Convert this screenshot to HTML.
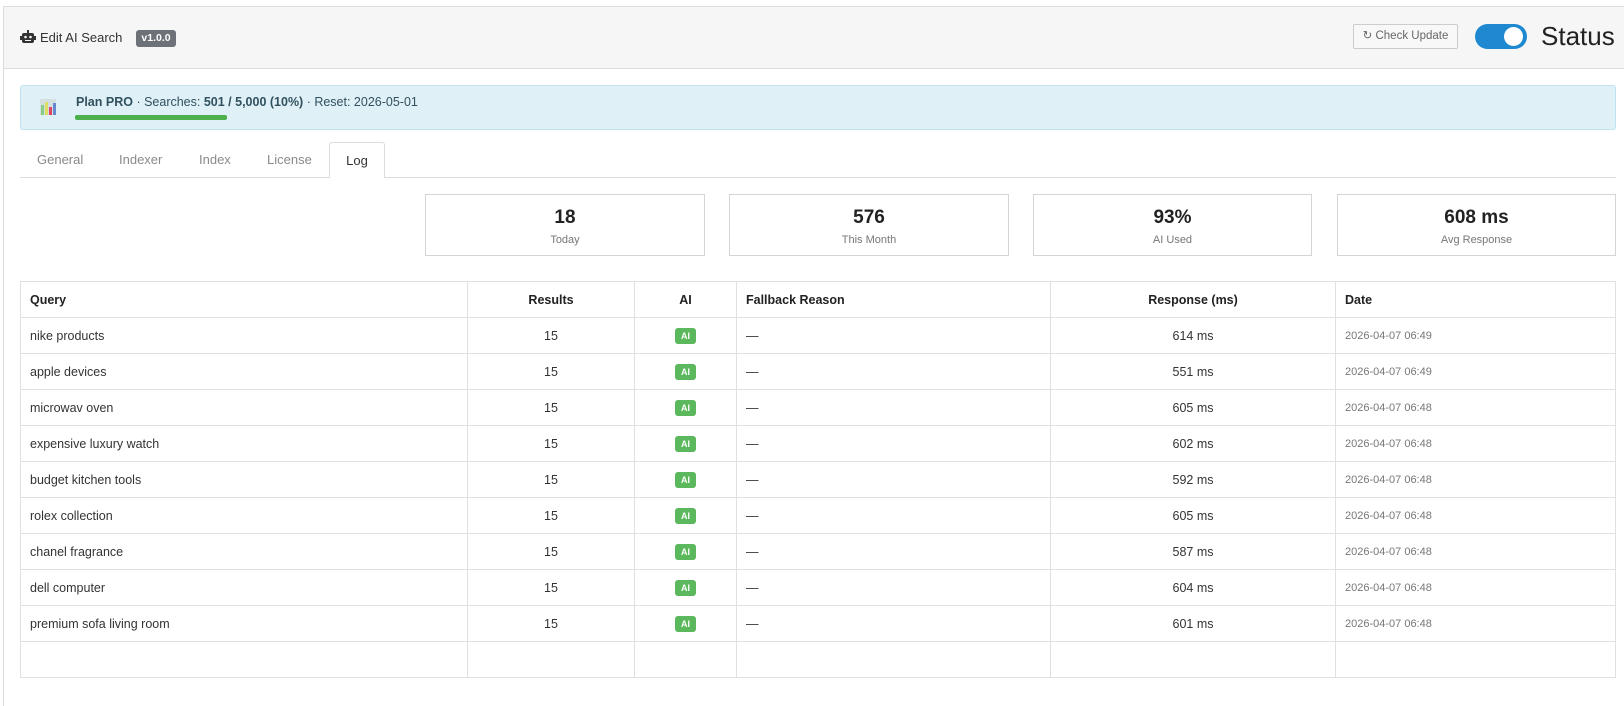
<!DOCTYPE html>
<html><head><meta charset="utf-8"><style>
*{box-sizing:border-box;margin:0;padding:0}
body{width:1624px;height:647px;overflow:hidden;background:#fff;font-family:"Liberation Sans",sans-serif;color:#333;position:relative}
.abs{position:absolute}
.frame{left:3px;top:6px;width:1640px;height:700px;border-left:1px solid #ddd;border-top:1px solid #ddd}
.head{left:4px;top:7px;width:1620px;height:62px;background:#f6f6f6;border-bottom:1px solid #ddd}
.title{left:40px;top:30px;font-size:13px;color:#333}
.badge{left:136px;top:30px;width:40px;height:17px;background:#6d7178;color:#fff;border-radius:3px;font-size:10.5px;font-weight:bold;text-align:center;line-height:17px}
.btn{left:1353px;top:24px;width:105px;height:25px;border:1px solid #ccc;border-radius:2px;background:#f8f8f8;font-size:11.5px;color:#666;line-height:23px;text-align:center}
.tog{left:1475px;top:24px;width:52px;height:25px;border-radius:13px;background:#1e88d0}
.tog:after{content:"";position:absolute;right:4px;top:3px;width:19px;height:19px;border-radius:50%;background:#fff}
.status{left:1541px;top:21px;font-size:26px;color:#222}
.alert{left:20px;top:85px;width:1596px;height:45px;background:#dff0f7;border:1px solid #bfe3ef;border-radius:3px}
.alert .t{position:absolute;left:55px;top:9px;font-size:12.5px;color:#31505e}
.bar{left:75px;top:115px;width:152px;height:5px;background:#4cb04c;border-radius:2px}
.tab{top:152px;font-size:13px;color:#8a8a8a}
.tabline{left:20px;top:177px;width:1596px;height:1px;background:#ddd}
.logtab{left:329px;top:142px;width:56px;height:36px;border:1px solid #ddd;border-bottom:none;background:#fff;border-radius:3px 3px 0 0;font-size:13px;color:#333;text-align:center;line-height:36px}
.card{top:194px;height:62px;border:1px solid #d5d5d5;text-align:center}
.card b{display:block;font-size:19px;margin-top:12px;color:#222}
.card span{display:block;font-size:11px;color:#777;margin-top:5px}
table{position:absolute;left:20px;top:281px;width:1596px;border-collapse:collapse;font-size:12.5px}
td,th{border:1px solid #e0e0e0;height:36px;padding:0 9px}
th{font-weight:bold;color:#222;text-align:left}
.c{text-align:center}
.ai{display:inline-block;width:21px;height:16px;background:#5cb85c;color:#fff;font-size:9px;font-weight:bold;border-radius:3px;line-height:16px;text-align:center}
.d{font-size:11px;color:#777}
</style></head><body>
<div class="abs frame"></div>
<div class="abs head"></div>
<svg class="abs" style="left:20px;top:30px" width="16" height="14" viewBox="0 0 16 14"><rect x="7" y="0" width="2" height="3" fill="#333"/><rect x="2" y="3" width="12" height="10" rx="2" fill="#333"/><rect x="0" y="6" width="2" height="4" fill="#333"/><rect x="14" y="6" width="2" height="4" fill="#333"/><circle cx="5.5" cy="7" r="1.3" fill="#f6f6f6"/><circle cx="10.5" cy="7" r="1.3" fill="#f6f6f6"/><rect x="5" y="10" width="6" height="1" fill="#f6f6f6"/></svg>
<div class="abs title">Edit AI Search</div>
<div class="abs badge">v1.0.0</div>
<div class="abs btn">&#x21bb; Check Update</div>
<div class="abs tog"></div>
<div class="abs status">Status</div>
<div class="abs alert"><div class="t"><b>Plan PRO</b> · Searches: <b>501 / 5,000 (10%)</b> · Reset: 2026-05-01</div></div>
<svg class="abs" style="left:40px;top:99px" width="16" height="16" viewBox="0 0 16 16"><rect x="0" y="0" width="16" height="16" fill="#ccc" opacity=".5"/><rect x="1" y="6" width="3" height="10" fill="#8c8"/><rect x="5" y="3" width="3" height="13" fill="#dd6"/><rect x="9" y="8" width="3" height="8" fill="#d46"/><rect x="13" y="4" width="3" height="12" fill="#68c"/></svg>
<div class="abs bar"></div>
<div class="abs tab" style="left:37px">General</div>
<div class="abs tab" style="left:119px">Indexer</div>
<div class="abs tab" style="left:199px">Index</div>
<div class="abs tab" style="left:267px">License</div>
<div class="abs tabline"></div>
<div class="abs logtab">Log</div>
<div class="abs card" style="left:425px;width:280px"><b>18</b><span>Today</span></div>
<div class="abs card" style="left:729px;width:280px"><b>576</b><span>This Month</span></div>
<div class="abs card" style="left:1033px;width:279px"><b>93%</b><span>AI Used</span></div>
<div class="abs card" style="left:1337px;width:279px"><b>608 ms</b><span>Avg Response</span></div>
<table>
<colgroup><col style="width:447px"><col style="width:167px"><col style="width:102px"><col style="width:314px"><col style="width:285px"><col></colgroup>
<tr><th>Query</th><th class="c">Results</th><th class="c">AI</th><th>Fallback Reason</th><th class="c">Response (ms)</th><th>Date</th></tr>
<tr><td>nike products</td><td class="c">15</td><td class="c"><span class="ai">AI</span></td><td>—</td><td class="c">614 ms</td><td class="d">2026-04-07 06:49</td></tr>
<tr><td>apple devices</td><td class="c">15</td><td class="c"><span class="ai">AI</span></td><td>—</td><td class="c">551 ms</td><td class="d">2026-04-07 06:49</td></tr>
<tr><td>microwav oven</td><td class="c">15</td><td class="c"><span class="ai">AI</span></td><td>—</td><td class="c">605 ms</td><td class="d">2026-04-07 06:48</td></tr>
<tr><td>expensive luxury watch</td><td class="c">15</td><td class="c"><span class="ai">AI</span></td><td>—</td><td class="c">602 ms</td><td class="d">2026-04-07 06:48</td></tr>
<tr><td>budget kitchen tools</td><td class="c">15</td><td class="c"><span class="ai">AI</span></td><td>—</td><td class="c">592 ms</td><td class="d">2026-04-07 06:48</td></tr>
<tr><td>rolex collection</td><td class="c">15</td><td class="c"><span class="ai">AI</span></td><td>—</td><td class="c">605 ms</td><td class="d">2026-04-07 06:48</td></tr>
<tr><td>chanel fragrance</td><td class="c">15</td><td class="c"><span class="ai">AI</span></td><td>—</td><td class="c">587 ms</td><td class="d">2026-04-07 06:48</td></tr>
<tr><td>dell computer</td><td class="c">15</td><td class="c"><span class="ai">AI</span></td><td>—</td><td class="c">604 ms</td><td class="d">2026-04-07 06:48</td></tr>
<tr><td>premium sofa living room</td><td class="c">15</td><td class="c"><span class="ai">AI</span></td><td>—</td><td class="c">601 ms</td><td class="d">2026-04-07 06:48</td></tr>
<tr><td>&nbsp;</td><td></td><td></td><td></td><td></td><td></td></tr>
</table>
</body></html>
